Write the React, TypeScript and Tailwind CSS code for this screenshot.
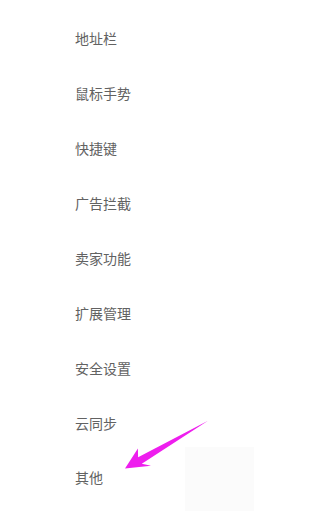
import React from "react";

const items = ["地址栏", "鼠标手势", "快捷键", "广告拦截", "卖家功能", "扩展管理", "安全设置", "云同步", "其他"];

export default function App() {
  return (
    <div className="relative w-[269px] h-[511px] overflow-hidden bg-white" style={{ fontFamily: '"Microsoft YaHei", "Noto Sans CJK SC", sans-serif' }}>
      <div className="absolute left-[185px] top-[447px] w-[69px] h-[64px] bg-[#fbfbfb]" />
      <div className="relative flex flex-col pt-[11px] pl-[75px]">
        {items.map((t) => (
          <div key={t} className="h-[54.875px] flex items-center text-[14px] leading-none text-[#626262]">
            {t}
          </div>
        ))}
      </div>
      <svg className="absolute left-0 top-0" width="269" height="511" viewBox="0 0 269 511">
        <polygon
          points="125,468.5 137.9,448.6 138.1,457.2 208,420.8 141.8,463.7 151,465.8"
          fill="#ee1eee"
        />
      </svg>
    </div>
  );
}
